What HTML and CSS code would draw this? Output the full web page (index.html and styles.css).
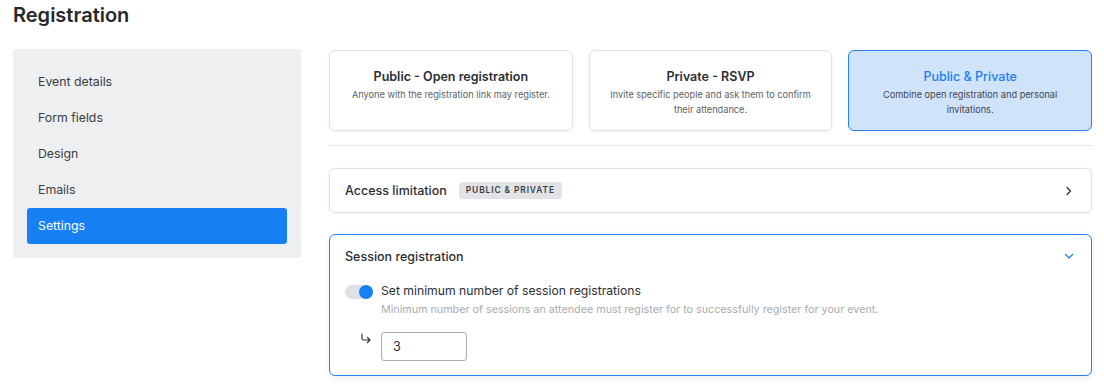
FILE: index.html
```html
<!DOCTYPE html>
<html lang="en">

<head>
    <meta charset="UTF-8">
    <meta name="viewport" content="width=device-width, initial-scale=1.0">
    <title>Registration</title>
    <link rel="stylesheet" href="styles.css">
</head>

<body>
    <div class="container">
        <h1 class="page-title">Registration</h1>

        <div class="layout">
            <aside class="sidebar">
                <a class="nav-item">Event details</a>
                <a class="nav-item">Form fields</a>
                <a class="nav-item">Design</a>
                <a class="nav-item">Emails</a>
                <a class="nav-item active">Settings</a>
            </aside>

            <main class="main-content">
                <div class="type-cards">
                    <div class="type-card">
                        <h3>Public - Open registration</h3>
                        <p>Anyone with the registration link may register.</p>
                    </div>
                    <div class="type-card">
                        <h3>Private - RSVP</h3>
                        <p>Invite specific people and ask them to confirm their attendance.</p>
                    </div>
                    <div class="type-card selected">
                        <h3>Public &amp; Private</h3>
                        <p>Combine open registration and personal invitations.</p>
                    </div>
                </div>

                <hr class="divider">

                <div class="panel">
                    <div class="panel-header">
                        <span class="panel-title">Access limitation</span>
                        <span class="badge">Public &amp; Private</span>
                        <svg class="chevron" width="12" height="12" viewBox="0 0 12 12">
                            <path d="M4 2.5 L7.5 6 L4 9.5" fill="none" stroke="#333" stroke-width="1.3" stroke-linecap="round" stroke-linejoin="round"/>
                        </svg>
                    </div>
                </div>

                <div class="panel open">
                    <div class="panel-header">
                        <span class="panel-title">Session registration</span>
                        <svg class="chevron" width="12" height="12" viewBox="0 0 12 12">
                            <path d="M2.5 4.5 L6 8 L9.5 4.5" fill="none" stroke="#1a7ff2" stroke-width="1.3" stroke-linecap="round" stroke-linejoin="round"/>
                        </svg>
                    </div>
                    <div class="panel-body">
                        <div class="toggle-row">
                            <span class="toggle"><span class="knob"></span></span>
                            <div>
                                <div class="toggle-label">Set minimum number of session registrations</div>
                                <div class="toggle-help">Minimum number of sessions an attendee must register for to successfully register for your event.</div>
                            </div>
                        </div>
                        <div class="input-row">
                            <svg class="sub-arrow" width="14" height="14" viewBox="0 0 14 14">
                                <path d="M3 2 V6.5 Q3 8 4.5 8 H11 M8.5 5.5 L11 8 L8.5 10.5" fill="none" stroke="#333" stroke-width="1.2" stroke-linecap="round" stroke-linejoin="round"/>
                            </svg>
                            <input class="num-input" type="text" value="3">
                        </div>
                    </div>
                </div>
            </main>
        </div>
    </div>
</body>

</html>
```

FILE: styles.css
```css
/* Reset */
* {
    margin: 0;
    padding: 0;
    box-sizing: border-box;
}

body {
    font-family: 'Inter', 'Liberation Sans', sans-serif;
    background-color: #fff;
    color: #2b2e33;
}

.container {
    padding: 0 12px 0 13px;
}

/* Header */
.page-title {
    font-size: 20px;
    font-weight: 600;
    line-height: 28px;
    color: #25282c;
    padding-top: 1px;
    margin-bottom: 20px;
}

.layout {
    display: flex;
    gap: 28px;
    align-items: flex-start;
}

/* Sidebar */
.sidebar {
    width: 288px;
    flex-shrink: 0;
    background-color: #eeeff1;
    border-radius: 3px;
    padding: 15px 14px 14px;
}

.nav-item {
    display: block;
    height: 36px;
    line-height: 36px;
    padding-left: 11px;
    font-size: 12.3px;
    color: #3a3d42;
    border-radius: 3px;
}

.nav-item.active {
    background-color: #1780f4;
    color: #fff;
}

/* Main */
.main-content {
    flex: 1;
    padding-top: 1px;
}

.type-cards {
    display: flex;
    gap: 16px;
}

.type-card {
    flex: 1;
    height: 81px;
    border: 1px solid #dfe1e4;
    border-radius: 6px;
    text-align: center;
    padding: 18px 14px 0;
    box-shadow: 0 1px 3px rgba(0, 0, 0, 0.06);
}

.type-card h3 {
    font-size: 12.5px;
    font-weight: 600;
    color: #2b2e33;
    line-height: 16px;
    margin-bottom: 2px;
}

.type-card p {
    font-size: 9.2px;
    line-height: 15px;
    color: #5b5f66;
}

.type-card.selected {
    background-color: #cfe3fb;
    border-color: #2583f0;
}

.type-card.selected h3 {
    color: #1a7ff2;
    font-weight: 500;
}

.type-card.selected p {
    color: #3f434a;
}

.divider {
    border: none;
    border-top: 1px solid #e3e4e7;
    margin: 14px 0 22px;
}

/* Panels */
.panel {
    border: 1px solid #dfe1e4;
    border-radius: 6px;
    margin-bottom: 21px;
    box-shadow: 0 1px 3px rgba(0, 0, 0, 0.05);
}

.panel.open {
    border-color: #2583f0;
    box-shadow: 0 2px 6px rgba(0, 0, 0, 0.08);
}

.panel-header {
    display: flex;
    align-items: center;
    height: 43px;
    padding: 0 16px 0 15px;
}

.panel.open .panel-header {
    height: 42px;
}

.panel-title {
    font-size: 12.5px;
    font-weight: 500;
    color: #2b2e33;
}

.badge {
    margin-left: 12px;
    background-color: #e1e3e6;
    color: #3a3d42;
    font-size: 8.4px;
    font-weight: 600;
    letter-spacing: 0.9px;
    text-transform: uppercase;
    padding: 0 7px;
    height: 17px;
    line-height: 17px;
    border-radius: 3px;
}

.chevron {
    margin-left: auto;
}

.panel-body {
    padding: 3px 15px 14px;
}

.toggle-row {
    display: flex;
    gap: 8px;
}

.toggle {
    position: relative;
    width: 28px;
    height: 14px;
    margin-top: 5px;
    background-color: #dfe1e4;
    border-radius: 7px;
    flex-shrink: 0;
}

.toggle .knob {
    position: absolute;
    right: 0;
    top: 0;
    width: 14px;
    height: 14px;
    border-radius: 50%;
    background-color: #1780f4;
}

.toggle-label {
    font-size: 12.2px;
    line-height: 22px;
    color: #2b2e33;
}

.toggle-help {
    font-size: 10.75px;
    line-height: 16px;
    color: #a8acb2;
}

.input-row {
    display: flex;
    align-items: flex-start;
    gap: 8px;
    margin-top: 14px;
    padding-left: 14px;
}

.sub-arrow {
    margin-top: 0;
}

.num-input {
    width: 86px;
    height: 29px;
    border: 1px solid #a9adb3;
    border-radius: 3px;
    padding-left: 11px;
    font-family: inherit;
    font-size: 12.5px;
    color: #2b2e33;
}
```
